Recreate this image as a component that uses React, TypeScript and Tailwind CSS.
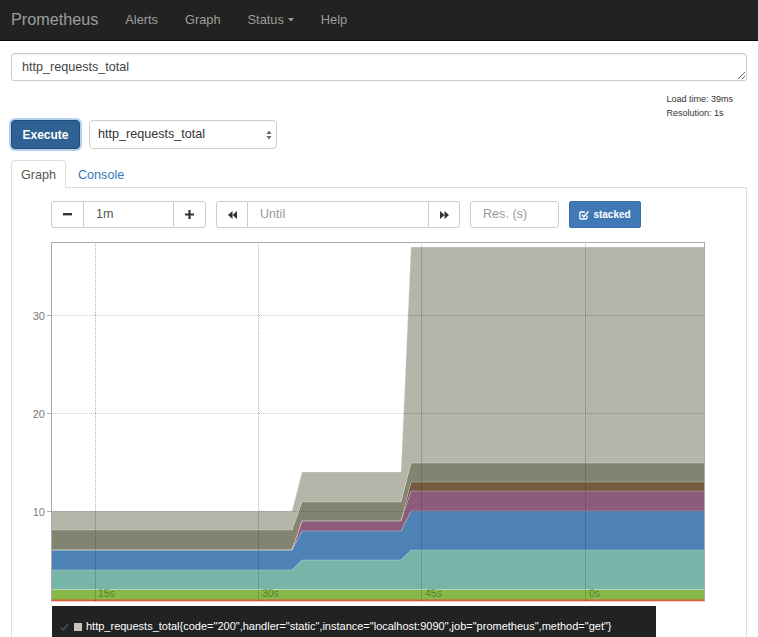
import React from "react";

const XS = [39, 280, 290, 389, 399, 693];
const B: number[][] = [
  [358, 358, 358, 358, 358, 358],
  [347.5, 347.5, 347.5, 347.5, 347.5, 347.5],
  [328, 328, 318, 318, 308, 308],
  [308, 308, 289, 289, 269, 269],
  [308, 308, 279, 279, 249, 249],
  [308, 308, 279, 279, 240, 240],
  [288, 288, 260, 260, 221, 221],
  [269, 269, 230, 230, 5, 5],
];
const COLORS = ["#85b948", "#77b5a9", "#4f82b4", "#8d5c7b", "#745b40", "#838371", "#b5b5a9"];

function areaPoints(bot: number[], top: number[]) {
  const t = XS.map((x, i) => `${x},${top[i]}`);
  const b = XS.map((x, i) => `${x},${bot[i]}`).reverse();
  return [...t, ...b].join(" ");
}
function linePoints(top: number[]) {
  return XS.map((x, i) => `${x},${top[i]}`).join(" ");
}

function Chart() {
  const vx = [83.5, 246.5, 409.5, 573.5];
  const xl = [
    { x: 86, t: "15s" },
    { x: 250, t: "30s" },
    { x: 413, t: "45s" },
    { x: 577, t: "0s" },
  ];
  const hy = [
    { y: 73.5, t: "30" },
    { y: 171.5, t: "20" },
    { y: 269.5, t: "10" },
  ];
  return (
    <svg width="694" height="360" className="block">
      {COLORS.map((c, i) => (
        <polygon key={i} points={areaPoints(B[i], B[i + 1])} fill={c} />
      ))}
      {COLORS.map((_, i) => (
        <polyline key={"l" + i} points={linePoints(B[i + 1])} fill="none" stroke="rgba(255,255,255,0.25)" strokeWidth="1" />
      ))}
      <rect x="39" y="357.5" width="654" height="1.8" fill="#d9593d" />
      {vx.map((x) => (
        <line key={x} x1={x} x2={x} y1="0" y2="359" stroke="rgba(0,0,0,0.3)" strokeDasharray="1 1" />
      ))}
      {hy.map((h) => (
        <g key={h.t}>
          <line x1="39" x2="693" y1={h.y} y2={h.y} stroke="rgba(0,0,0,0.22)" strokeDasharray="1 1" />
          <line x1="35" x2="39" y1={h.y} y2={h.y} stroke="#aaa" />
          <text x="33" y={h.y + 4} textAnchor="end" fontSize="11" fill="#7a7a7a" fontFamily="Liberation Sans, Arial, sans-serif">
            {h.t}
          </text>
        </g>
      ))}
      {xl.map((l) => (
        <text key={l.t} x={l.x} y="355" fontSize="10.5" fill="rgba(0,0,0,0.35)" fontFamily="Liberation Sans, Arial, sans-serif">
          {l.t}
        </text>
      ))}
      <line x1="39" x2="693" y1="0.5" y2="0.5" stroke="#aaa" />
      <line x1="39.5" x2="39.5" y1="0" y2="359" stroke="#aaa" />
      <line x1="692.5" x2="692.5" y1="0" y2="359" stroke="#aaa" />
    </svg>
  );
}

const LEGEND = [
  { c: "#c6c6bc", t: 'http_requests_total{code="200",handler="static",instance="localhost:9090",job="prometheus",method="get"}' },
  { c: "#8a8a78", t: 'http_requests_total{code="200",handler="prometheus",instance="localhost:9090",job="prometheus",method="get"}' },
  { c: "#745b40", t: 'http_requests_total{code="200",handler="graph",instance="localhost:9090",job="prometheus",method="get"}' },
  { c: "#8d5c7b", t: 'http_requests_total{code="200",handler="query",instance="localhost:9090",job="prometheus",method="get"}' },
];

function Legend() {
  return (
    <div className="ml-[40px] mt-[4px] w-[604px] bg-[#222] pt-[13px] pl-[8px] pb-[6px]">
      {LEGEND.map((l, i) => (
        <div key={i} className="flex items-center h-[15px] text-[11px] leading-[15px] text-white whitespace-nowrap">
          <svg width="9" height="8" className="mr-[5px]">
            <path d="M0.8 4.5 L3 7 L8.2 0.8" fill="none" stroke="#3b4b60" strokeWidth="1.8" />
          </svg>
          <span className="w-[8px] h-[8px] mr-[4px]" style={{ backgroundColor: l.c }} />
          <span>{l.t}</span>
        </div>
      ))}
    </div>
  );
}

export default function App() {
  return (
    <div className="h-[637px] overflow-hidden bg-white font-['Liberation_Sans',Arial,sans-serif] flex flex-col">
      <div className="h-[41px] shrink-0 bg-[#222] border-b border-[#080808] flex items-center pb-[1px]">
        <span className="pl-[11px] pr-[13.5px] text-[16.2px] text-[#9d9d9d]">Prometheus</span>
        <span className="px-[13.5px] text-[12.8px] text-[#9d9d9d]">Alerts</span>
        <span className="px-[13.5px] text-[12.8px] text-[#9d9d9d]">Graph</span>
        <span className="px-[13.5px] text-[12.8px] text-[#9d9d9d] flex items-center">
          Status
          <svg width="6" height="4" className="ml-[4px] mt-[1px]">
            <path d="M0 0 H6 L3 3.5 Z" fill="#9d9d9d" />
          </svg>
        </span>
        <span className="px-[13.5px] text-[12.8px] text-[#9d9d9d]">Help</span>
      </div>

      <div className="px-[11px] flex-1 flex flex-col">
        <textarea
          readOnly
          value="http_requests_total"
          className="block w-full h-[28px] mt-[12px] border border-[#ccc] rounded-[3px] px-[10px] py-[6px] text-[12.6px] leading-[14px] text-[#444] resize-y overflow-hidden shadow-[inset_0_1px_1px_rgba(0,0,0,0.075)] outline-none"
        />
        <div className="flex justify-end mt-[11px]">
          <div className="mr-[14px] text-[9px] leading-[14px] text-[#333]">
            <div>Load time: 39ms</div>
            <div>Resolution: 1s</div>
          </div>
        </div>
        <div className="flex items-center gap-[9px] h-[29px]">
          <div className="w-[69px] h-[29px] bg-[#2f6194] border border-[#224d78] rounded-[4px] shadow-[0_0_0_2px_rgba(120,170,225,0.55)] flex items-center justify-center text-white font-bold text-[12px]">
            Execute
          </div>
          <div className="w-[188px] h-[29px] border border-[#ccc] rounded-[4px] flex items-center justify-between pl-[8px] pr-[4px] text-[12.6px] text-[#333]">
            <span>http_requests_total</span>
            <svg width="6" height="10">
              <path d="M0.5 4 L3 0.5 L5.5 4 Z M0.5 6 L3 9.5 L5.5 6 Z" fill="#666" />
            </svg>
          </div>
        </div>

        <div className="mt-[11px] flex border-b border-[#ddd] h-[28px]">
          <div className="h-[28px] px-[9px] pt-[2px] border border-[#ddd] border-b-white bg-white rounded-t-[4px] flex items-center text-[12.6px] text-[#555]">
            Graph
          </div>
          <div className="h-[28px] ml-[2px] px-[9px] pt-[2px] border border-transparent flex items-center text-[12.6px] text-[#337ab7]">
            Console
          </div>
        </div>

        <div className="flex-1 border-l border-r border-[#ddd] pt-[13px]">
          <div className="flex pl-[39px] h-[27px] text-[12.6px]">
            <div className="w-[33px] h-[27px] border border-[#ccc] rounded-l-[3px] flex items-center justify-center bg-white">
              <svg width="9" height="3"><rect width="9" height="2.4" fill="#333" /></svg>
            </div>
            <div className="w-[89px] h-[27px] border-y border-[#ccc] pl-[12px] flex items-center text-[#555]">1m</div>
            <div className="w-[33px] h-[27px] border border-[#ccc] rounded-r-[3px] flex items-center justify-center bg-white">
              <svg width="9" height="9"><path d="M3.4 0h2.2v3.4H9v2.2H5.6V9H3.4V5.6H0V3.4h3.4z" fill="#333" /></svg>
            </div>

            <div className="ml-[10px] w-[32px] h-[27px] border border-[#ccc] rounded-l-[3px] flex items-center justify-center bg-white">
              <svg width="9" height="8"><path d="M4.5 0v8L0 4z M9 0v8L4.5 4z" fill="#333" /></svg>
            </div>
            <div className="w-[180px] h-[27px] border-y border-[#ccc] pl-[12px] flex items-center text-[#999]">Until</div>
            <div className="w-[32px] h-[27px] border border-[#ccc] rounded-r-[3px] flex items-center justify-center bg-white">
              <svg width="9" height="8"><path d="M0 0v8l4.5-4z M4.5 0v8L9 4z" fill="#333" /></svg>
            </div>

            <div className="ml-[10px] w-[89px] h-[27px] border border-[#ccc] rounded-[3px] pl-[12px] flex items-center text-[#999]">
              Res. (s)
            </div>

            <div className="ml-[10px] w-[72px] h-[27px] bg-[#4179b6] border border-[#3a6ea8] rounded-[2px] flex items-center justify-center gap-[4px] text-white font-bold text-[10px]">
              <svg width="10" height="10" viewBox="0 0 10 10">
                <path d="M8 5.6V8a1 1 0 0 1-1 1H1.8a1 1 0 0 1-1-1V3a1 1 0 0 1 1-1H6" fill="none" stroke="#fff" strokeWidth="1.3" />
                <path d="M2.8 4.8l2 2L9.4 1.4" fill="none" stroke="#fff" strokeWidth="1.5" />
              </svg>
              <span>stacked</span>
            </div>
          </div>

          <div className="mt-[14px]">
            <Chart />
          </div>
          <Legend />
        </div>
      </div>
    </div>
  );
}
